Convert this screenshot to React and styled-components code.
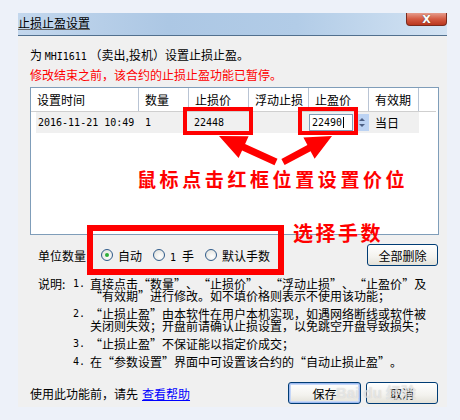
import styled, { createGlobalStyle, css } from "styled-components";

const GlobalStyle = createGlobalStyle`
  html, body {
    margin: 0;
    padding: 0;
    background: #edf1f9;
  }
  body {
    font-family: "Noto Sans CJK SC", "Liberation Sans", sans-serif;
    font-size: 12px;
    color: #000;
  }
`;

const mono = css`
  font-family: "DejaVu Sans Mono", "Liberation Mono", monospace;
  font-size: 10px;
`;

const Page = styled.div`
  width: 460px;
  height: 420px;
  padding: 13px 0 0 18px;
  box-sizing: border-box;
`;

const Dialog = styled.div`
  position: relative;
  width: 429px;
  height: 394px;
  background: #f0f0f0;
  display: flex;
  flex-direction: column;
`;

const TitleBar = styled.div`
  height: 22px;
  border-bottom: 1px solid #52708e;
  background: linear-gradient(90deg, #c3d7ed 0%, #acc7e4 35%, #b2cce7 65%, #d3e3f3 100%);
  display: flex;
  justify-content: space-between;
  align-items: flex-start;
`;

const Title = styled.span`
  line-height: 18px;
  margin-top: 1px;
  text-decoration: underline;
  text-decoration-color: #666;
`;

const CloseBtn = styled.div`
  width: 41px;
  height: 13px;
  box-sizing: border-box;
  background: linear-gradient(#e69c8c, #d45a42 50%, #b9371e);
  border: 1px solid #7a2a1c;
  border-top: none;
  border-radius: 0 0 4px 4px;
  display: flex;
  justify-content: center;
  align-items: center;
  color: #fff;
  font: bold 11px "DejaVu Sans", sans-serif;
  line-height: 1;
  text-shadow: 0 0 1px #333;
`;

const Body = styled.div`
  flex: 1;
  display: flex;
  flex-direction: column;
  padding: 10px 8px 0 12px;
`;

const Info = styled.div`
  line-height: 18px;
  color: ${(p) => (p.$red ? "#ff0000" : "#000")};
  white-space: nowrap;
`;

const Mono = styled.span`
  ${mono};
`;

const Table = styled.div`
  margin-top: 3px;
  width: 409px;
  height: 148px;
  box-sizing: border-box;
  border: 1px solid #7f9db9;
  background: #fff;
`;

const HeaderRow = styled.div`
  display: grid;
  grid-template-columns: 108px 50px 60px 60px 60px 50px 1fr;
  height: 24px;
  box-sizing: border-box;
  border-bottom: 1px solid #cfcfcf;
  margin-right: 2px;
`;

const HeadCell = styled.div`
  padding-left: 6px;
  line-height: 23px;
  border-right: ${(p) => (p.$last ? "none" : "1px solid #b9c4d4")};
  white-space: nowrap;
`;

const DataRow = styled.div`
  margin-left: 5px;
  width: 383px;
  height: 21px;
  background: #f0f0f0;
  display: grid;
  grid-template-columns: 103px 50px 60px 60px 60px 50px;
  align-items: center;
`;

const Cell = styled.div`
  padding-left: ${(p) => p.$pad ?? 6}px;
  white-space: nowrap;
  ${(p) => p.$mono && mono};
`;

const EditCell = styled.div`
  display: flex;
  height: 17px;
`;

const EditInput = styled.div`
  width: 44px;
  box-sizing: border-box;
  border: 1px solid #7f9db9;
  background: #fff;
  padding-left: 2px;
  line-height: 15px;
  ${mono};
`;

const Caret = styled.span`
  display: inline-block;
  width: 1px;
  height: 11px;
  background: #000;
  vertical-align: -2px;
  margin-left: 1px;
`;

const Spinner = styled.div`
  width: 15px;
  margin-left: 1px;
  background: #bcd3f3;
  display: flex;
  flex-direction: column;
  justify-content: center;
  align-items: center;
  gap: 3px;
`;

const Tri = styled.div`
  width: 0;
  height: 0;
  border-left: 3px solid transparent;
  border-right: 3px solid transparent;
  ${(p) =>
    p.$down
      ? "border-top: 3px solid #4d6185;"
      : "border-bottom: 3px solid #4d6185;"}
`;

const UnitRow = styled.div`
  margin-top: 8px;
  height: 24px;
  display: flex;
  align-items: center;
  padding-left: 8px;
`;

const RadioGroup = styled.div`
  display: flex;
  align-items: center;
  gap: 11px;
  margin-left: 15px;
`;

const RadioItem = styled.label`
  display: flex;
  align-items: center;
  gap: 5px;
  white-space: nowrap;
`;

const RadioDot = styled.span`
  width: 12px;
  height: 12px;
  box-sizing: border-box;
  border-radius: 50%;
  border: 1px solid #2f5b8a;
  background: radial-gradient(circle at 60% 65%, #ffffff 0%, #dcdcd6 100%);
  display: flex;
  justify-content: center;
  align-items: center;

  &::after {
    content: "";
    width: 4px;
    height: 4px;
    border-radius: 50%;
    background: ${(p) => (p.$on ? "#2fae3a" : "transparent")};
  }
`;

const Hand = styled.span`
  margin-left: 6px;
`;

const Button = styled.div`
  width: ${(p) => p.$w}px;
  height: 22px;
  box-sizing: border-box;
  border: 1px solid #003c74;
  border-radius: 3px;
  background: linear-gradient(#ffffff, #f3f2ee 60%, #e3e1d8);
  display: flex;
  justify-content: center;
  align-items: center;
  white-space: nowrap;
  ${(p) =>
    p.$default &&
    css`
      box-shadow: inset 0 0 0 1px #9dbaf0, inset 0 0 0 2px #c6d7f7;
    `}
`;

const PushRight = styled.div`
  margin-left: auto;
  margin-right: 1px;
  display: flex;
  gap: 5px;
`;

const Notes = styled.div`
  margin-top: 11px;
  display: grid;
  grid-template-columns: 35px 17px 338px;
  padding-left: 8px;
  row-gap: 6px;
  line-height: 12px;
`;

const NoteLabel = styled.div`
  white-space: nowrap;
`;

const NoteNum = styled.div`
  ${mono};
`;

const NoteText = styled.div`
  white-space: pre;
`;

/* full-width curly quote cell, as the bitmap font draws it */
const Quote = styled.span`
  display: inline-block;
  width: 12px;
  text-align: ${(p) => (p.$open ? "right" : "left")};
`;

const Footer = styled.div`
  margin-top: 14px;
  height: 22px;
  display: flex;
  align-items: center;
`;

const HelpText = styled.div`
  white-space: nowrap;
`;

const Link = styled.a`
  color: #0000ff;
  text-decoration: underline;
  margin-left: 4px;
`;

/* annotation layer drawn over the dialog */
const Marks = styled.div`
  position: absolute;
  inset: 0;
  pointer-events: none;
`;

const RedBox = styled.div`
  position: absolute;
  left: ${(p) => p.$x}px;
  top: ${(p) => p.$y}px;
  width: ${(p) => p.$w}px;
  height: ${(p) => p.$h}px;
  box-sizing: border-box;
  border: ${(p) => p.$b}px solid #ff0000;
`;

const RedNote = styled.div`
  position: absolute;
  left: ${(p) => p.$x}px;
  top: ${(p) => p.$y}px;
  color: #ff0000;
  font-weight: 700;
  font-size: ${(p) => p.$size}px;
  line-height: ${(p) => p.$size}px;
  letter-spacing: ${(p) => p.$ls}px;
  white-space: nowrap;
`;

const ArrowLayer = styled.svg`
  position: absolute;
  left: 0;
  top: 0;
`;

const Watermark = styled.div`
  position: absolute;
  left: 318px;
  top: 368px;
  color: rgba(255, 255, 255, 0.5);
  text-shadow: 0 0 1px rgba(160, 160, 160, 0.55);
  font: bold 15px "Liberation Sans", "Noto Sans CJK SC", sans-serif;
  white-space: nowrap;
`;

const heads = ["设置时间", "数量", "止损价", "浮动止损", "止盈价", "有效期", ""];

const notes = [
  ["1.", "直接点击“数量”、“止损价”、“浮动止损”、“止盈价”及\n“有效期”进行修改。如不填价格则表示不使用该功能；"],
  ["2.", "“止损止盈”由本软件在用户本机实现，如遇网络断线或软件被\n关闭则失效；开盘前请确认止损设置，以免跳空开盘导致损失；"],
  ["3.", "“止损止盈”不保证能以指定价成交；"],
  ["4.", "在“参数设置”界面中可设置该合约的“自动止损止盈”。"],
];

// split a note so each curly quote gets a full-width cell
const withQuotes = (text) =>
  text.split(/([“”])/).map((part, i) =>
    part === "“" || part === "”" ? (
      <Quote key={i} $open={part === "“"}>
        {part}
      </Quote>
    ) : (
      part
    )
  );

function App() {
  return (
    <>
      <GlobalStyle />
      <Page>
        <Dialog>
          <TitleBar>
            <Title>止损止盈设置</Title>
            <CloseBtn>X</CloseBtn>
          </TitleBar>
          <Body>
            <Info>
              为 <Mono>MHI1611</Mono> （卖出,投机）设置止损止盈。
            </Info>
            <Info $red>修改结束之前，该合约的止损止盈功能已暂停。</Info>

            <Table>
              <HeaderRow>
                {heads.map((h, i) => (
                  <HeadCell key={i} $last={i === heads.length - 1}>
                    {h}
                  </HeadCell>
                ))}
              </HeaderRow>
              <DataRow>
                <Cell $pad={2} $mono>
                  2016-11-21 10:49
                </Cell>
                <Cell $pad={6} $mono>
                  1
                </Cell>
                <Cell $pad={5} $mono>
                  22448
                </Cell>
                <Cell />
                <EditCell>
                  <EditInput>
                    22490
                    <Caret />
                  </EditInput>
                  <Spinner>
                    <Tri />
                    <Tri $down />
                  </Spinner>
                </EditCell>
                <Cell>当日</Cell>
              </DataRow>
            </Table>

            <UnitRow>
              单位数量
              <RadioGroup>
                <RadioItem>
                  <RadioDot $on />
                  自动
                </RadioItem>
                <RadioItem>
                  <RadioDot />
                  <span>
                    <Mono>1</Mono>
                    <Hand>手</Hand>
                  </span>
                </RadioItem>
                <RadioItem>
                  <RadioDot />
                  默认手数
                </RadioItem>
              </RadioGroup>
              <PushRight>
                <Button $w={71}>全部删除</Button>
              </PushRight>
            </UnitRow>

            <Notes>
              {notes.map(([n, t], i) => [
                <NoteLabel key={"l" + i}>{i === 0 ? "说明:" : ""}</NoteLabel>,
                <NoteNum key={"n" + i}>{n}</NoteNum>,
                <NoteText key={"t" + i}>{withQuotes(t)}</NoteText>,
              ])}
            </Notes>

            <Footer>
              <HelpText>
                使用此功能前，请先<Link>查看帮助</Link>
              </HelpText>
              <PushRight>
                <Button $w={73} $default>
                  保存
                </Button>
                <Button $w={72}>取消</Button>
              </PushRight>
            </Footer>
          </Body>

          <Marks>
            <Watermark>Bai du 经验</Watermark>
            <RedBox $x={165} $y={94} $w={70} $h={28} $b={4} />
            <RedBox $x={280} $y={94} $w={60} $h={28} $b={4} />
            <RedBox $x={69} $y={212} $w={197} $h={50} $b={6} />
            <ArrowLayer width="429" height="394" viewBox="18 13 429 394">
              <polygon
                fill="#ff0000"
                points="219,136 248.6,136.3 245.1,144 277.5,158.8 274.5,165.2 242.1,150.4 238.6,158.1"
              />
              <polygon
                fill="#ff0000"
                points="332,136 303.4,137.6 307.4,145.1 281.4,158.9 284.6,165.1 310.6,151.3 314.6,158.8"
              />
            </ArrowLayer>
            <RedNote $x={119} $y={156} $size={19} $ls={3.6}>
              鼠标点击红框位置设置价位
            </RedNote>
            <RedNote $x={275} $y={210} $size={20} $ls={2.5}>
              选择手数
            </RedNote>
          </Marks>
        </Dialog>
      </Page>
    </>
  );
}

export default App;
